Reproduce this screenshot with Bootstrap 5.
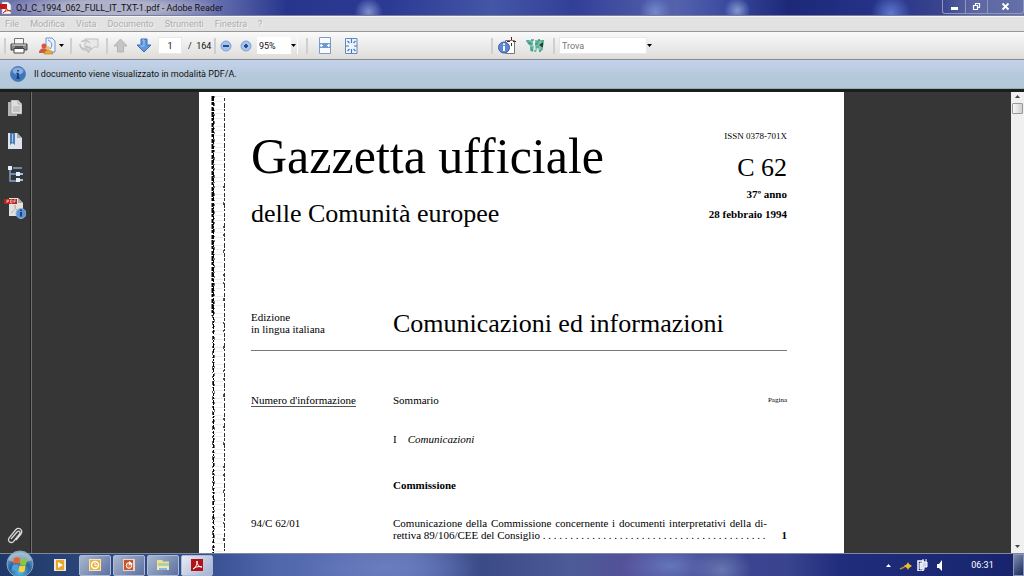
<!DOCTYPE html>
<html lang="it">
<head>
<meta charset="utf-8">
<meta name="viewport" content="width=device-width, initial-scale=1">
<title>OJ_C_1994_062_FULL_IT_TXT-1.pdf - Adobe Reader</title>
<link rel="stylesheet" href="https://cdn.jsdelivr.net/npm/bootstrap@5.3.0/dist/css/bootstrap.min.css">
<style>
  body { font-family: Roboto, "Open Sans", sans-serif; font-size: 9px; line-height: 12px; color: #111; background: #363636; }
  svg { display: block; flex: none; }
  button { font: inherit; color: inherit; background: none; border: 0; padding: 0; }

  .window-title { height: 16px; font-size: 9px; border-bottom: 1px solid #7b7f9a;
    background:
      radial-gradient(110px 16px at 110px 8px, #b4b6ccee 45%, transparent),
      radial-gradient(circle at 36% 80%, #7f8fcf 0, transparent 14px),
      radial-gradient(circle at 72% 70%, #8398d2 0, transparent 13px),
      radial-gradient(circle at 87% 90%, #5f78cf 0, transparent 20px),
      radial-gradient(circle at 64% 80%, #7488cc 0, transparent 16px),
      linear-gradient(90deg, #6a70ac 0, #7078b4 20%, #27358c 28%, #2c3a94 38%, #4456a6 48%, #333f97 56%, #5563ad 66%, #3b4a9f 71%, #1d2878 77%, #26348a 87%, #3b458e 92%, #5c66a2 95%, #6570a8 100%); }
  .caption-btns { height: 14px; border: 1px solid #8d97c4; border-top: 0; border-radius: 0 0 3px 3px; }
  .caption-btns button { width: 22px; height: 13px; }
  .caption-btns button + button { border-left: 1px solid #8d97c4; }
  .caption-btns button:last-child { width: 36px; }

  .menu-strip { height: 16px; gap: 11px; padding: 0 5px; background: #e3e2e2; border-top: 1px solid #f6f6f6; border-bottom: 1px solid #979797; }
  .menu-strip a { color: #adadad; text-decoration: none; text-shadow: 1px 1px #f4f4f4; }

  .tool-strip { height: 28px; padding: 0 4px; background: linear-gradient(#fafafa, #eee 40%, #dfddda); border-bottom: 1px solid #858b92; }
  .tool-sep { width: 2px; height: 16px; background: #d0cfcd; flex: none; }
  .tool-strip button { height: 22px; flex: none; display: flex; align-items: center; justify-content: center; gap: 3px; }
  .b-sm { width: 20px; } .b-md { width: 24px; } .b-lg { width: 26px; } .b-xl { width: 28px; }
  .b-mail { width: 38px; } .b-collab { width: 34px; }
  .tool-strip input, .tool-strip select { height: 17px; border: 1px solid #e8e8e8; border-radius: 0; color: #111; font-size: 9px; line-height: 14px; padding: 0 2px; flex: none; background-color: #fff; }
  .in-page { width: 24px; margin: 0 6px 0 2px; text-align: center; }
  .page-total { width: 26px; }
  .tool-strip .in-zoom { width: 42px; appearance: none; border-color: transparent; background: linear-gradient(90deg, #fff 34px, transparent 34px); }
  .zoom-caret { right: 2px; top: 7px; pointer-events: none; }
  .in-find { width: 88px; }
  .in-find::placeholder { color: #777; opacity: 1; }
  .tool-gap { flex: 0 0 12.5%; }

  .info-strip { height: 29px; padding-left: 10px; gap: 8px; background: linear-gradient(#c5d3ea, #b7c9dc 50%, #b2c8d7); border-bottom: 1px solid #9aabbd; }

  .viewer { background: #363636; border-top: 3px solid #1b1f1b; }
  .side-pane { width: 32px; border-right: 1px solid #707070; box-shadow: inset -1px 0 #222; padding-bottom: 7px; }
  .side-pane button { width: 30px; height: 33px; display: flex; align-items: center; justify-content: center; }
  .side-pane .b-clip { height: 20px; }
  .sheet { max-width: 645px; background: #fff; color: #000; font-family: "Liberation Serif", "Times New Roman", serif; font-size: 11px; line-height: 12px; }
  .scan-edge { width: 16px; margin-left: 11px; margin-top: 4px; }
  .sheet-body { margin-left: 25px; margin-right: 57px; padding-top: 36px; }
  .mast-main { font-size: 50px; line-height: 56px; margin: 0; font-weight: 400; }
  .mast-sub, .edition h2 { font-size: 26px; line-height: 32px; margin: 0; font-weight: 400; }
  .mast-sub { padding-top: 14px; }
  .mast-c { font-size: 26px; line-height: 32px; }
  .issn { font-size: 9px; padding: 2px 0; }
  .edition { margin-top: 78px; padding-bottom: 10px; border-bottom: 1px solid #777; }
  .edition-lang { width: 142px; flex: none; padding-top: 3px; }
  .toc { width: 100%; margin-top: 43px; table-layout: fixed; }
  .toc th, .toc td { padding: 0; font-weight: 400; vertical-align: top; height: 39px; }
  .toc .row-group td { height: 46px; }
  .toc .row-comm td { height: 38px; font-weight: 700; }
  .toc .c-num { width: 142px; } .toc .c-page { width: 21px; }
  .num-head { border-bottom: 1px solid #555; display: inline-block; }
  .toc .pg { font-size: 7px; text-align: right; }
  .entry { text-align: justify; text-align-last: justify; width: 374px; }

  .scroll-col { width: 13px; background: #f0f0f0; padding: 3px 0 5px; }
  .scroll-thumb { width: 11px; height: 11px; margin-top: 5px; border: 1px solid #999; border-radius: 1px; background: linear-gradient(90deg, #f8f8f8, #cfcfcf); }

  .task-strip { height: 23px; color: #fff; border-top: 1px solid #8088a0; padding-left: 5px;
    background:
      radial-gradient(90px 30px at 385px 14px, #6a7dbd, transparent),
      radial-gradient(30px 24px at 722px 16px, #7284b8cc, transparent),
      radial-gradient(50px 24px at 670px 12px, #6476b9, transparent),
      linear-gradient(90deg, #1f3869 0, #2a4578 8%, #354f90 20%, #5268ad 27%, #5d70b5 40%, #3b4b88 47%, #4d5b98 56%, #544f98 62%, #3a4390 71%, #39448f 77%, #202d7c 82%, #17246c 100%); }
  .orb { width: 30px; height: 22px; }
  .orb svg { margin-top: -4px; }
  .task-btn { width: 32px; height: 21px; margin-right: 2px; display: flex; align-items: center; justify-content: center; border: 1px solid #aebbd8; border-radius: 2px; background: linear-gradient(135deg, #a9b6cf, #5c71a0); }
  .task-btn.is-plain { border-color: transparent; background: none; width: 34px; margin-left: 8px; }
  .task-btn.is-active { background: linear-gradient(135deg, #e6eaf4, #a4b2d4); }
  .show-desk { width: 11px; height: 22px; border: 1px solid #8a94b8; background: linear-gradient(135deg, #7f8db0, #1a2a5c); }
  .clock { width: 45px; text-align: center; }
</style>
</head>
<body class="vh-100 d-flex flex-column overflow-hidden">

<header class="flex-shrink-0">
  <div class="window-title d-flex align-items-center">
    <svg width="12" height="14" viewBox="0 0 12 14"><path d="M2 1h6l3 3v9H2z" fill="#fff" stroke="#999" stroke-width=".6"/><path d="M0 3h7v5H0z" fill="#c01818"/><path d="M3 12c3-2 4-5 3-7 0 3 2 5 5 5-3-1-6 0-8 2" stroke="#c22" fill="none"/></svg>
    <span class="ms-1">OJ_C_1994_062_FULL_IT_TXT-1.pdf - Adobe Reader</span>
    <div class="caption-btns d-flex ms-auto align-self-start">
      <button type="button" aria-label="Riduci a icona"><svg class="mx-auto" width="9" height="9"><path d="M1 5h7v3H1z" fill="#fff"/></svg></button>
      <button type="button" aria-label="Ripristina"><svg class="mx-auto" width="9" height="9"><path d="M3.500 3V1.500h4v4H6M1.500 3.500h4v4h-4z" fill="none" stroke="#fff" stroke-width="1.200"/></svg></button>
      <button type="button" aria-label="Chiudi"><svg class="mx-auto" width="9" height="9"><path d="M1.500 1.500l6 6m0-6l-6 6" stroke="#fff" stroke-width="1.800"/></svg></button>
    </div>
  </div>

  <nav class="menu-strip d-flex align-items-center">
    <a href="#">File</a><a href="#">Modifica</a><a href="#">Vista</a><a href="#">Documento</a><a href="#">Strumenti</a><a href="#">Finestra</a><a href="#">?</a>
  </nav>

  <div class="tool-strip d-flex align-items-center">
    <span class="tool-sep"></span>
    <button type="button" class="b-lg" aria-label="Stampa"><svg width="18" height="18" viewBox="0 0 18 18"><path d="M4.500 1.500h9V8h-9z" fill="#f6f6f6" stroke="#777"/><path d="M1 7h16v6H1z" fill="#8a8a8a" stroke="#444"/><path d="M2 8h14" stroke="#ddd"/><path d="M4 11.500h10V16H4z" fill="#fff" stroke="#444"/><path d="M5 10h8" stroke="#222"/></svg></button>
    <button type="button" class="b-mail" aria-label="Invia"><svg width="17" height="18" viewBox="0 0 17 18"><path d="M7 1h6l3 3v11H7z" fill="#e9f2ff" stroke="#7396c8"/><path d="M9 3c4 2 5 5 2 9" stroke="#5d8dd0" fill="none"/><circle cx="5" cy="9" r="2.500" fill="#d9534a"/><path d="M0 15c1-5 8-5 9 0v1H0z" fill="#cc5b42"/><circle cx="9" cy="11" r="2" fill="#f0c058"/><path d="M5 17c0-5 9-5 9 0z" fill="#e8a93c" stroke="#b77a22" stroke-width=".6"/></svg><svg width="5" height="3"><path d="M0 0h5L2.500 3z"/></svg></button>
    <span class="tool-sep"></span>
    <button type="button" class="b-collab" aria-label="Collabora" disabled><svg width="20" height="17" viewBox="0 0 20 17"><path d="M6 2h13v8h-4l-3 3v-3H6z" fill="#e8e8e8" stroke="#c1c1c1"/><path d="M2 5c3-3 7-2 9 1M1 7c0 4 3 5 7 4l-1-2 5 3-3 4v-3C4 14 1 12 1 7z" fill="#d6d6d6" stroke="#bcbcbc"/></svg></button>
    <span class="tool-sep"></span>
    <button type="button" class="b-md" aria-label="Pagina precedente" disabled><svg width="15" height="15" viewBox="0 0 15 15"><path d="M7.500 1L14 8h-3.500v6h-6V8H1z" fill="#c5c5c5" stroke="#b3b3b3"/></svg></button>
    <button type="button" class="b-md" aria-label="Pagina successiva"><svg width="16" height="15" viewBox="0 0 16 15"><path d="M8 14L15 7h-4V1H5v6H1z" fill="#5f98de" stroke="#3a6fb7"/><path d="M6 2h2v6H4" stroke="#9fc4f2" fill="none"/></svg></button>
    <input class="in-page" type="text" value="1" aria-label="Pagina">
    <span class="page-total">/&nbsp; 164</span>
    <span class="tool-sep"></span>
    <button type="button" class="b-sm" aria-label="Zoom indietro"><svg width="12" height="12"><circle cx="6" cy="6" r="5" fill="#a5c2ea" stroke="#7fa2d2"/><path d="M3 6h6" stroke="#244f94" stroke-width="2"/></svg></button>
    <button type="button" class="b-sm" aria-label="Zoom avanti"><svg width="12" height="12"><circle cx="6" cy="6" r="5" fill="#a5c2ea" stroke="#7fa2d2"/><path d="M4 6h4M6 4v4" stroke="#244f94" stroke-width="2"/></svg></button>
    <div class="position-relative">
      <select class="in-zoom d-block" aria-label="Zoom"><option>95%</option></select>
      <svg class="zoom-caret position-absolute" width="5" height="3"><path d="M0 0h5L2.500 3z"/></svg>
    </div>
    <span class="tool-sep ms-2 me-1"></span>
    <button type="button" class="b-lg" aria-label="Adatta alla larghezza"><svg width="14" height="17" viewBox="0 0 14 17"><path d="M1.500 6V.500h11V6M1.500 11v5.500h11V11" fill="#f8fbff" stroke="#7f9cc4"/><path d="M1 6h12v5H1z" fill="#6c9bd2"/><path d="M2 8.500h3M9 8.500h3M4 7L2 8.500 4 10M10 7l2 1.500L10 10" stroke="#fff" fill="none"/></svg></button>
    <button type="button" class="b-lg" aria-label="Pagina intera"><svg width="13" height="16" viewBox="0 0 13 16"><path d="M.500.500H12v15H.500z" fill="#eef5ff" stroke="#6688b8"/><path d="M6.500 1v4M6.500 11v4M1 8h3M9 8h3M2.500 3l2 2M10.500 3l-2 2M2.500 13l2-2M10.500 13l-2-2" stroke="#4477b8" stroke-width="1.200"/></svg></button>
    <span class="tool-gap"></span>
    <span class="tool-sep"></span>
    <button type="button" class="b-xl" aria-label="Informazioni oggetto"><svg width="18" height="18" viewBox="0 0 18 18"><path d="M7.500 3.500h9v13h-9z" fill="#fff" stroke="#777"/><path d="M13.500 0v3m0 3v3M9 4.500h3m3 0h3" stroke="#5a2020"/><circle cx="6" cy="10.500" r="5.500" fill="#5d88d0" stroke="#3c5fa6"/><path d="M6 9v5M6 6.500v1.500" stroke="#fff" stroke-width="2"/></svg></button>
    <button type="button" class="b-xl" aria-label="Geolocalizzazione"><svg width="19" height="14" viewBox="0 0 19 14"><path d="M1 1h6v3l-1 2 2 1-1 6-3-1V7L1 4zM9 1h9v5l-2 1v5h-3l-1-4-2 5-1-6z" fill="#7cc59c"/><path d="M0 2h3M5 1h3M10 3h3M3 5h4M4 9h3M10 8h3M15 10h2M15 2h3M8 12h2" stroke="#4a9ccc" stroke-width="1.500" fill="none"/><path d="M2 4h3M9 5h3M5 11h2M13 12h2M12 1h2" stroke="#3c9a4c" stroke-width="1.500"/><path d="M17 3v6l-4-3z" fill="#1f4430"/></svg></button>
    <span class="tool-sep ms-1 me-1"></span>
    <input class="in-find" type="text" placeholder="Trova" aria-label="Trova">
    <button type="button" aria-label="Opzioni di ricerca"><svg width="5" height="3"><path d="M0 0h5L2.500 3z"/></svg></button>
  </div>

  <div class="info-strip d-flex align-items-center">
    <svg width="16" height="16"><circle cx="8" cy="8" r="7.500" fill="#3e76be" stroke="#5c7fb2"/><ellipse cx="8" cy="5" rx="5.500" ry="3.500" fill="#86aee0"/><path d="M8 7v5M6.500 7.500H8M6.500 12h3M8 4v1.500" stroke="#14366e" stroke-width="1.600"/></svg>
    <span>Il documento viene visualizzato in modalità PDF/A.</span>
  </div>
</header>

<main class="viewer d-flex flex-grow-1 overflow-hidden">
  <aside class="side-pane d-flex flex-column flex-shrink-0">
    <button type="button" aria-label="Pagine"><svg width="14" height="17" viewBox="0 0 14 17"><path d="M0 2h9v14H0z" fill="#b5b5b5"/><path d="M3 0h7l4 4v10H3z" fill="#dedede" stroke="#888" stroke-width=".6"/><path d="M10 0v4h4M5 7h7M5 9h7M5 11h7" stroke="#aaa" fill="none"/></svg></button>
    <button type="button" aria-label="Segnalibri"><svg width="14" height="17" viewBox="0 0 14 17"><path d="M0 0h9l5 5v11H0z" fill="#dfe4ea"/><path d="M9 0v5h5" fill="#aaa"/><path d="M2 0h5v12L4.500 10 2 12z" fill="#4c7fb4"/><path d="M4.500 1v8" stroke="#a8caea"/></svg></button>
    <button type="button" aria-label="Struttura"><svg width="15" height="17" viewBox="0 0 15 17"><path d="M2 3v12h7M2 8h7M5 2h9" stroke="#7fa6d4" fill="none" stroke-width="1.400"/><path d="M0 0h4v4H0zM8 6h4v4H8zM8 12h4v4H8z" fill="#e2efff"/><path d="M12 8h3M12 14h3" stroke="#9cc0ea" stroke-width="2"/></svg></button>
    <button type="button" aria-label="Standard PDF/A"><svg width="22" height="22" viewBox="0 0 22 22"><path d="M5 1h9l5 5v13H5z" fill="#e3e1dd"/><path d="M14 1v5h5" fill="#aaa"/><path d="M0 2h13v5H0z" fill="#b5231d"/><path d="M3 6V3h1.500v1.500H3M6.500 3v3h1.500V3zM10 6V3h2M10 4.500h1.500" stroke="#f4d0cc" stroke-width=".7" fill="none"/><path d="M7 16c3-2 5-5 4-8 0 4 2 6 5 6" stroke="#c9a8a4" fill="none"/><circle cx="17" cy="16.500" r="5" fill="#5c93d2" stroke="#86b2e2"/><path d="M17 15v4.500M17 12.500v1.500" stroke="#102e60" stroke-width="1.600"/></svg></button>
    <button type="button" class="b-clip mt-auto" aria-label="Allegati"><svg width="16" height="18" viewBox="0 0 16 18"><path d="M4 12L10 5c2-2 4 0 2.500 2L7 14c-2 3-7 1-5-3L8.500 3c3-4 8 0 5.500 4L9 13" fill="none" stroke="#d8d8d8" stroke-width="1.300"/></svg></button>
  </aside>

  <div class="flex-grow-1 d-flex justify-content-center overflow-hidden">
    <article class="sheet w-100 d-flex overflow-hidden">
      <svg class="scan-edge" height="458" aria-hidden="true">
        <g fill="none" stroke="#000">
          <path d="M8.500 0V458" stroke="#eee" stroke-width="9" stroke-dasharray="1 4 1 7 1 3"/>
          <path d="M2.500 0V220" stroke-width="2" stroke-dasharray="5 1 3 2 4 1"/>
          <path d="M3.500 0V458" stroke-dasharray="5 1 4 2 3 1 2 1"/>
          <path d="M2.500 220V458" stroke="#555" stroke-dasharray="2 3 4 2 1 3"/>
          <path d="M4.500 0V458" stroke="#777" stroke-dasharray="2 5 3 4 1 3"/>
          <path d="M14.500 2V458" stroke="#333" stroke-dasharray="3 2 5 1 2 2 4 1"/>
          <path d="M13.500 90V458" stroke-dasharray="2 14 3 21 2 6" stroke="#555"/>
        </g>
      </svg>
      <div class="sheet-body flex-grow-1">
        <div class="d-flex justify-content-between">
          <div>
            <h1 class="mast-main">Gazzetta ufficiale</h1>
            <div class="mast-sub">delle Comunità europee</div>
          </div>
          <div class="text-end">
            <div class="issn">ISSN 0378-701X</div>
            <div class="mast-c mt-2">C 62</div>
            <div class="fw-bold mt-1">37º anno</div>
            <div class="fw-bold mt-2">28 febbraio 1994</div>
          </div>
        </div>
        <div class="edition d-flex">
          <div class="edition-lang">Edizione<br>in lingua italiana</div>
          <h2>Comunicazioni ed informazioni</h2>
        </div>
        <table class="toc">
          <thead>
            <tr><th class="c-num"><span class="num-head">Numero d'informazione</span></th><th>Sommario</th><th class="c-page pg">Pagina</th></tr>
          </thead>
          <tbody>
            <tr class="row-group"><td></td><td>I &nbsp;&nbsp; <em>Comunicazioni</em></td><td></td></tr>
            <tr class="row-comm"><td></td><td>Commissione</td><td></td></tr>
            <tr><td>94/C 62/01</td>
              <td><div class="entry">Comunicazione della Commissione concernente i documenti interpretativi della di-</div>
                <div class="text-nowrap">rettiva 89/106/CEE del Consiglio . . . . . . . . . . . . . . . . . . . . . . . . . . . . . . . . . . . . . . . . .</div></td>
              <td class="text-end fw-bold"><br>1</td></tr>
          </tbody>
        </table>
      </div>
    </article>
  </div>

  <div class="scroll-col d-flex flex-column align-items-center flex-shrink-0">
    <svg width="5" height="3"><path d="M0 3h5L2.500 0z" fill="#444"/></svg>
    <div class="scroll-thumb"></div>
    <svg class="mt-auto" width="5" height="3"><path d="M0 0h5L2.500 3z" fill="#444"/></svg>
  </div>
</main>

<footer class="task-strip d-flex align-items-center flex-shrink-0">
  <button type="button" class="orb" aria-label="Start"><svg width="30" height="28" viewBox="0 0 30 28"><defs><radialGradient id="orbFill" cx="50%" cy="80%" r="80%"><stop offset="0" stop-color="#5cc0ea"/><stop offset=".5" stop-color="#27639c"/><stop offset="1" stop-color="#9cb6cc"/></radialGradient></defs><circle cx="15" cy="14" r="13" fill="url(#orbFill)" stroke="#8aa4bd"/><path d="M3 10a13 12 0 0 1 24 0c-8 4-16 4-24 0z" fill="#c8d8e4" opacity=".5"/><path d="M9 8c2-1 4-1 6 0l-1 6c-2-1-4-1-6 0z" fill="#e8622c"/><path d="M16 8.500c2 1 4 1 6.500 0L21 15c-2 1-4 1-6-.500z" fill="#8cc63c"/><path d="M7.500 15c2-1 4-1 6 0l-1 6c-2-1-4-1-6 0z" fill="#4aa0e0"/><path d="M14.500 15.500c2 1 4 1 6 0l-1 6c-2 1-4 1-6-.500z" fill="#fbd23c"/></svg></button>
  <button type="button" class="task-btn is-plain" aria-label="Media Player"><svg width="12" height="12"><path d="M0 0h12v12H0z" fill="#eee7d6"/><path d="M2 1h8v10H2z" fill="#e9a82c"/><path d="M4 3l5 3-5 3z" fill="#fff"/></svg></button>
  <button type="button" class="task-btn" aria-label="Posta"><svg width="12" height="12"><path d="M0 0h12v12H0z" fill="#f8e4b0"/><path d="M1 1h10v10H1z" fill="#e8b444"/><circle cx="6" cy="6" r="3.500" fill="none" stroke="#fff" stroke-width="1.500"/><path d="M6 4v2.500h2" stroke="#fff" fill="none"/></svg></button>
  <button type="button" class="task-btn" aria-label="Presentazioni"><svg width="12" height="12"><path d="M0 0h12v12H0z" fill="#f0d3c4"/><path d="M1 1h9v10H1z" fill="#c2562c"/><circle cx="6" cy="6.500" r="2.800" fill="#d97a50" stroke="#fff"/><path d="M6 6V2l4 3z" fill="#fff"/></svg></button>
  <button type="button" class="task-btn" aria-label="Esplora risorse"><svg width="14" height="12"><path d="M1 1h5l1 1.500h6V11H1z" fill="#f2dd8a"/><path d="M2 4h11v4H2z" fill="#a9d3b0"/><path d="M1 7h12v4H1z" fill="#f3e7b4"/><path d="M3 9h8v2H3z" fill="#8db8dc"/></svg></button>
  <button type="button" class="task-btn is-active" aria-label="Adobe Reader"><svg width="12" height="12"><path d="M0 0h12v12H0z" fill="#b01217"/><path d="M2 10c3-1 4-5 4-8 0 4 2 6 5 6-4-1-7 0-9 2z" fill="none" stroke="#fff"/></svg></button>

  <div class="d-flex align-items-center ms-auto">
    <svg class="me-2" width="5" height="3"><path d="M0 3h5L2.500 0z" fill="#fff"/></svg>
    <svg width="14" height="11" viewBox="0 0 14 11"><path d="M1 9c2-1 4-1 5-3" stroke="#c8901c" fill="none" stroke-width="1.500"/><path d="M9 2l1 2 3 2-3 2-1 2-1-2-3-2 3-2z" fill="#eebf2a"/></svg>
    <svg class="ms-1" width="11" height="12" viewBox="0 0 11 12"><path d="M1 2h5v10H1z" fill="none" stroke="#fff" stroke-width="1.500"/><path d="M3 4h2v6H3zM5 3h5v5H7v3" fill="#cdd3e6" stroke="#fff"/><path d="M6 3V0M9 3V0" stroke="#fff"/></svg>
    <svg class="ms-2" width="8" height="11" viewBox="0 0 8 11"><path d="M1 4h2l3-4v11L3 8H1z" fill="#fff"/></svg>
    <span class="clock ms-3">06:31</span>
    <button type="button" class="show-desk ms-2" aria-label="Mostra desktop"></button>
  </div>
</footer>

<script src="https://cdn.jsdelivr.net/npm/bootstrap@5.3.0/dist/js/bootstrap.bundle.min.js"></script>
</body>
</html>
